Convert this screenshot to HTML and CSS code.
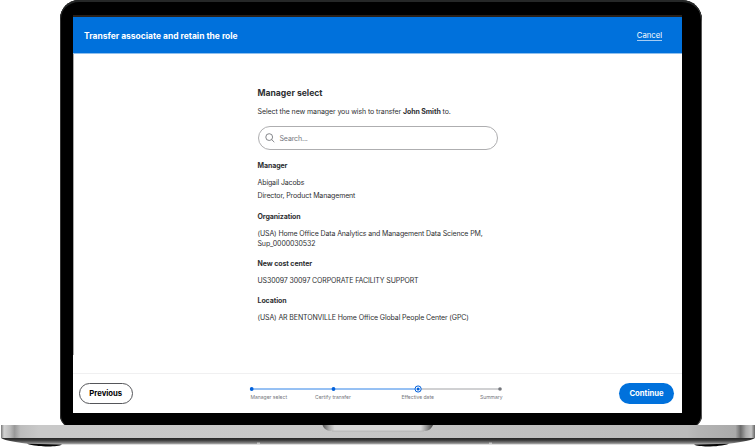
FILE: index.html
```
<!DOCTYPE html>
<html lang="en">
<head>
<meta charset="utf-8">
<title>Transfer associate</title>
<link rel="stylesheet" href="styles.css">
</head>
<body>
<div class="laptop">
  <div class="lid">
    <div class="screen">
      <header class="topbar">
        <h1 class="topbar-title">Transfer associate and retain the role</h1>
        <a class="cancel">Cancel</a>
      </header>
      <main class="content">
        <h2 class="heading">Manager select</h2>
        <p class="intro"><span>Select the new manager you wish to transfer <b>John Smith</b> to.</span></p>
        <div class="search">
          <svg class="search-icon" viewBox="0 0 10 10"><circle cx="4.2" cy="4.1" r="3.4"/><path d="M6.7 6.6 9.3 9.2"/></svg>
          <span>Search...</span>
        </div>
        <section class="field manager">
          <h3>Manager</h3>
          <p><span>Abigail Jacobs</span></p>
          <p class="role"><span>Director, Product Management</span></p>
        </section>
        <section class="field organization">
          <h3>Organization</h3>
          <p>(USA) Home Office Data Analytics and Management Data Science PM,<br>Sup_0000030532</p>
        </section>
        <section class="field">
          <h3>New cost center</h3>
          <p>US30097 30097 CORPORATE FACILITY SUPPORT</p>
        </section>
        <section class="field">
          <h3>Location</h3>
          <p>(USA) AR BENTONVILLE Home Office Global People Center (GPC)</p>
        </section>
      </main>
      <footer class="footer">
        <button class="btn previous">Previous</button>
        <div class="stepper">
          <svg class="track" viewBox="0 0 254 8">
            <path class="done-line" d="M3 4H169"/>
            <path class="todo-line" d="M169 4H251"/>
            <circle class="done" cx="2.7" cy="4" r="1.9"/>
            <circle class="done" cx="84.5" cy="4" r="1.9"/>
            <circle class="ring" cx="169.1" cy="4" r="3.1"/>
            <circle class="done" cx="169.1" cy="4" r="1.6"/>
            <circle class="todo" cx="251" cy="4" r="1.8"/>
          </svg>
          <div class="labels"><span>Manager select</span><span>Certify transfer</span><span>Effective date</span><span>Summary</span></div>
        </div>
        <button class="btn continue">Continue</button>
      </footer>
    </div>
  </div>
  <svg class="base" viewBox="0 0 756 22">
    <defs>
      <linearGradient id="metal" x1="0" x2="1" y1="0" y2="0">
        <stop offset="0" stop-color="#777"/><stop offset=".004" stop-color="#d2d2d2"/><stop offset=".012" stop-color="#bbb"/><stop offset=".018" stop-color="#999"/><stop offset=".026" stop-color="#bdbdbd"/><stop offset=".05" stop-color="#c9c9c9"/><stop offset=".4" stop-color="#c8c8c8"/><stop offset=".7" stop-color="#c0c0c0"/><stop offset=".91" stop-color="#bbb"/><stop offset=".925" stop-color="#b4b4b4"/><stop offset=".974" stop-color="#aaa"/><stop offset=".981" stop-color="#6b6b6b"/><stop offset=".988" stop-color="#aaa"/><stop offset=".995" stop-color="#c5c5c5"/><stop offset="1" stop-color="#666"/>
      </linearGradient>
      <linearGradient id="under" x1="0" x2="0" y1="0" y2="1">
        <stop offset="0" stop-color="#252525"/><stop offset=".35" stop-color="#3c3c3c"/><stop offset=".7" stop-color="#777"/><stop offset="1" stop-color="#bbb"/>
      </linearGradient>
      <linearGradient id="notch" x1="0" x2="1" y1="0" y2="0">
        <stop offset="0" stop-color="#555"/><stop offset=".06" stop-color="#aaa"/><stop offset=".11" stop-color="#d8d8d8"/><stop offset=".89" stop-color="#d8d8d8"/><stop offset=".94" stop-color="#999"/><stop offset="1" stop-color="#444"/>
      </linearGradient>
    </defs>
    <path d="M1 13H755C751 16 738 17.2 724 19.5H32C18 17.2 5 16 1 13Z" fill="url(#under)"/>
    <path d="M27 18.7 62 19.5C57 22.5 37 22 27 18.7ZM729 18.7 694 19.5C699 22.5 719 22 729 18.7Z" fill="#080808"/>
    <path d="M1 0H755V13H1Z" fill="url(#metal)"/>
    <path d="M322.5 0H433C431 4.5 428 6 424 6H332C327 6 324 4 322.5 0Z" fill="url(#notch)"/>
    <path d="M332 6H424" stroke="#aaa" stroke-width=".6"/>
    <path d="M257 18.2H260M489 18.2H492" stroke="#ddd"/>
  </svg>
</div>
</body>
</html>
```

FILE: styles.css
```
* { box-sizing: border-box; }
body { margin: 0; background: #fff; font-family: Inter, sans-serif; color: #2e2f32; overflow: hidden; }
h1, h2, h3, p { margin: 0; }
.laptop { width: 756px; height: 447px; display: flex; flex-direction: column; }
.lid { width: 642px; height: 428px; flex: none; margin: 0 0 -3px 60px; padding: 15px 20px 15px 13px; background: #000; border-radius: 19px 20px 13px 13px; box-shadow: inset 0 2px 0 #252727, inset 1px 0 0 #333, inset -1px 0 0 #555; }
.screen { height: 398px; display: flex; flex-direction: column; background: linear-gradient(#aaa, #aaa) 0 0 / 1px 338px no-repeat #fff; border-top: 2px solid #292019; }
.topbar { height: 37px; flex: none; display: flex; align-items: center; justify-content: space-between; padding: 1px 20px 0 11px; background: #0071dc; color: #fff; border-bottom: 1px solid #8fc0ee; }
.topbar-title { font-size: 8.48px; font-weight: 700; line-height: 12px; }
.cancel { font-size: 7.7px; line-height: 9px; border-bottom: 1px solid #a6cdf3; margin-top: 1px; }
.content { width: 240.5px; margin-left: 184.5px; padding-top: 33px; flex: 1; min-height: 0; font-size: 7px; letter-spacing: -.12px; }
.heading { font-size: 8.6px; letter-spacing: 0; font-weight: 700; line-height: 12px; }
.intro { line-height: 10px; margin-top: 8px; letter-spacing: -.09px; }
.search { height: 24px; margin-top: 9px; border: 1px solid #aeaeb0; border-radius: 12px; display: flex; align-items: center; gap: 5px; padding-left: 6px; color: #74767c; }
.search-icon { width: 10px; height: 10px; fill: none; stroke: #66686d; stroke-width: .8; }
.field { line-height: 10px; margin-top: 10px; }
.manager { margin-top: 11px; }
.field h3 { font-size: 7px; letter-spacing: -.08px; line-height: 10px; font-weight: 700; }
.field p { margin-top: 7px; }
.field .role { margin-top: 3px; }
.organization { margin-top: 10.5px; }
.footer { height: 40px; flex: none; display: flex; align-items: center; border-top: 1px solid #f0f0f1; padding: 0 8px 0 6px; }
.btn { height: 21px; border-radius: 11px; padding: 0; font: 700 7.7px Inter, sans-serif; }
.previous { width: 53.5px; border: 1px solid #55565a; background: #fff; color: #000; }
.continue { width: 55px; border: 0; background: #0071dc; color: #fff; margin-left: auto; }
.stepper { width: 254px; margin: -2px 0 0 116.5px; }
.track { width: 254px; height: 8px; display: block; }
.done-line { stroke: #2e82e8; }
.todo-line { stroke: #a1a2a6; }
.done { fill: #0060dc; }
.todo { fill: #74767c; }
.ring { fill: #fff; stroke: #0060dc; }
.labels { display: grid; grid-template-columns: 64.5px 86.5px 78.5px auto; font-size: 5px; line-height: 6px; color: #74767c; padding-left: 1.5px; margin-top: 1px; }
.base { width: 756px; height: 22px; flex: none; display: block; position: relative; }
```
